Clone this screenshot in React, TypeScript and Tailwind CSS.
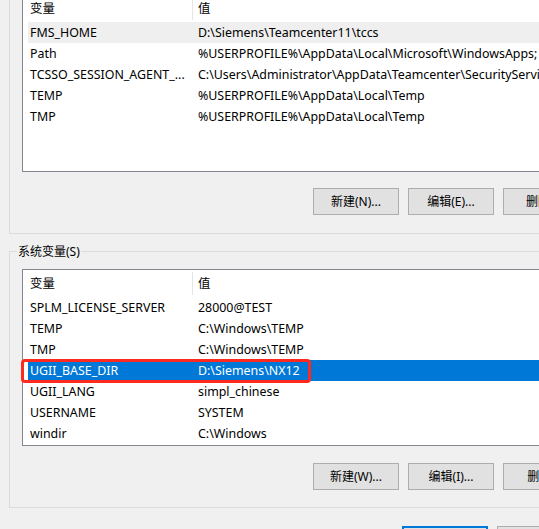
import React from 'react';

type Row = { name: string; value: string; state?: 'hover' | 'selected' };

const userVars: Row[] = [
  { name: 'FMS_HOME', value: 'D:\\Siemens\\Teamcenter11\\tccs', state: 'hover' },
  { name: 'Path', value: '%USERPROFILE%\\AppData\\Local\\Microsoft\\WindowsApps;' },
  { name: 'TCSSO_SESSION_AGENT_...', value: 'C:\\Users\\Administrator\\AppData\\Teamcenter\\SecurityServices\\tcsso' },
  { name: 'TEMP', value: '%USERPROFILE%\\AppData\\Local\\Temp' },
  { name: 'TMP', value: '%USERPROFILE%\\AppData\\Local\\Temp' },
];

const systemVars: Row[] = [
  { name: 'SPLM_LICENSE_SERVER', value: '28000@TEST' },
  { name: 'TEMP', value: 'C:\\Windows\\TEMP' },
  { name: 'TMP', value: 'C:\\Windows\\TEMP' },
  { name: 'UGII_BASE_DIR', value: 'D:\\Siemens\\NX12', state: 'selected' },
  { name: 'UGII_LANG', value: 'simpl_chinese' },
  { name: 'USERNAME', value: 'SYSTEM' },
  { name: 'windir', value: 'C:\\Windows' },
];

const VarRow = ({ row }: { row: Row }) => {
  const bg =
    row.state === 'selected'
      ? 'bg-[#0078d7] text-white'
      : row.state === 'hover'
        ? 'bg-[#efefef]'
        : '';
  return (
    <div className={`relative ml-[5px] flex h-[21px] items-center whitespace-nowrap ${bg}`}>
      <span className="w-[170px] shrink-0 overflow-hidden pl-[2px]">{row.name}</span>
      <span>{row.value}</span>
      {row.state === 'selected' && (
        <div className="absolute -left-[7px] -top-[1px] h-[24px] w-[290px] rounded-[4px] border-[3px] border-[#ff2a1f]" />
      )}
    </div>
  );
};

const VarList = ({ rows, className }: { rows: Row[]; className: string }) => (
  <div className={`ml-[12px] w-[600px] shrink-0 border border-[#828790] bg-white text-[12.4px] ${className}`}>
    <div className="flex h-[27px] items-center">
      <span className="w-[169px] shrink-0 pl-[7px]">变量</span>
      <span className="h-[23px] w-px bg-[#e5e5e5]" />
      <span className="pl-[5px]">值</span>
    </div>
    {rows.map((r) => (
      <VarRow key={r.name} row={r} />
    ))}
  </div>
);

const Btn = ({ label, primary }: { label: string; primary?: boolean }) => (
  <button
    className={`h-[27px] w-[86px] shrink-0 bg-[#e1e1e1] ${
      primary ? 'border-2 border-[#0078d7]' : 'border border-[#adadad]'
    }`}
  >
    {label}
  </button>
);

export default function App() {
  return (
    <div className="flex h-[529px] w-[539px] flex-col overflow-hidden bg-[#f0f0f0] text-[12px] leading-[16px] text-black font-['Noto_Sans','Noto_Sans_CJK_SC',sans-serif]">
      {/* 用户变量 */}
      <div className="ml-[9px] flex h-[234px] w-[620px] shrink-0 flex-col border-b border-l border-[#dcdcdc]">
        <VarList rows={userVars} className="-mt-[6px] h-[178px]" />
        <div className="mt-[16px] flex gap-[9px] pl-[303px]">
          <Btn label="新建(N)..." />
          <Btn label="编辑(E)..." />
          <Btn label="删除(D)" />
        </div>
      </div>

      {/* 系统变量 */}
      <div className="relative ml-[9px] mt-[17px] flex h-[257px] w-[620px] shrink-0 flex-col border-b border-l border-t border-[#dcdcdc]">
        <span className="absolute -top-[8px] left-[7px] bg-[#f0f0f0] px-[1px]">系统变量(S)</span>
        <VarList rows={systemVars} className="mt-[17px] h-[177px]" />
        <div className="mt-[17px] flex gap-[9px] pl-[303px]">
          <Btn label="新建(W)..." />
          <Btn label="编辑(I)..." />
          <Btn label="删除(L)" />
        </div>
      </div>

      <div className="mt-[18px] flex shrink-0 gap-[9px] pl-[402px]">
        <Btn label="确定" primary />
        <Btn label="取消" />
      </div>
    </div>
  );
}
